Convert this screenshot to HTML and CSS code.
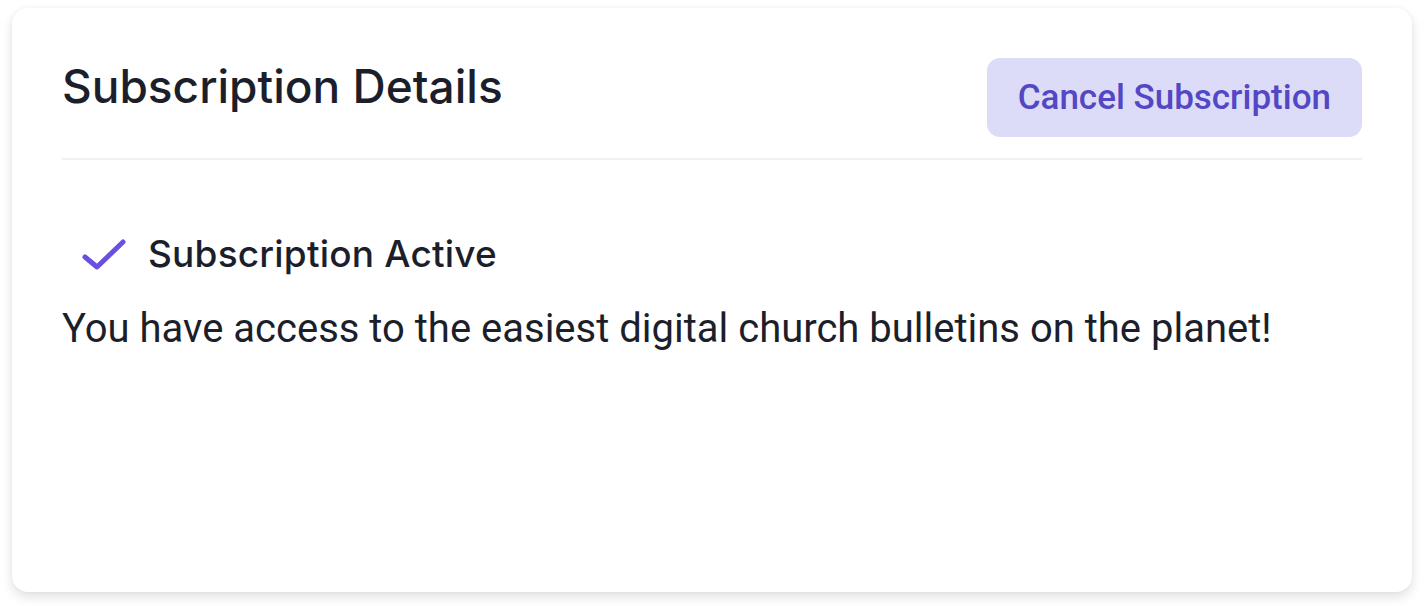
FILE: index.html
```html
<!DOCTYPE html>
<html>
<head>
<meta charset="utf-8">
<link rel="stylesheet" href="styles.css">
</head>
<body>
<div class="card">
  <div class="header">
    <h2 class="title">Subscription Details</h2>
    <button class="cancel">Cancel Subscription</button>
  </div>
  <div class="content">
    <div class="status">
      <svg class="check" width="48" height="34" viewBox="0 0 48 34">
        <path d="M5 20 L17 30 L43 5" fill="none" stroke="#6b4fe0" stroke-width="5" stroke-linecap="round" stroke-linejoin="round"/>
      </svg>
      <span class="status-text">Subscription Active</span>
    </div>
    <p class="desc">You have access to the easiest digital church bulletins on the planet!</p>
  </div>
</div>
</body>
</html>
```
FILE: styles.css
```css
html, body {
  margin: 0;
  padding: 0;
  background: #ffffff;
}
.card {
  box-sizing: border-box;
  margin: 8px 14px 14px 12px;
  width: 1400px;
  height: 584px;
  background: #ffffff;
  border-radius: 16px;
  box-shadow: 0 5px 12px rgba(0,0,0,0.12), 0 0 4px rgba(0,0,0,0.04);
  padding: 50px 50px;
}
.header {
  display: flex;
  justify-content: space-between;
  align-items: flex-start;
  padding-bottom: 21px;
  border-bottom: 2px solid #eef1f5;
}
.title {
  margin: 0;
  font-family: Inter, "Noto Sans", sans-serif;
  font-weight: 500;
  font-size: 46px;
  line-height: 56px;
  letter-spacing: 0;
  color: #1c1f2b;
}
.cancel {
  font-family: Roboto, "Liberation Sans", sans-serif;
  font-weight: 500;
  font-size: 35px;
  line-height: 41px;
  color: #5447c4;
  background: #dcdcf8;
  border: none;
  border-radius: 13px;
  padding: 19px 31px;
  height: 79px;
}
.content {
  padding-top: 72px;
}
.status {
  display: flex;
  align-items: center;
  padding-left: 18px;
}
.check {
  display: block;
  margin-right: 20px;
}
.status-text {
  font-family: Inter, "Noto Sans", sans-serif;
  font-weight: 500;
  font-size: 37px;
  line-height: 44px;
  letter-spacing: 0.2px;
  color: #1c1f2b;
}
.desc {
  margin: 29px 0 0 0;
  font-family: Roboto, "Liberation Sans", sans-serif;
  font-size: 40px;
  line-height: 48px;
  color: #1c1f2b;
}
```
